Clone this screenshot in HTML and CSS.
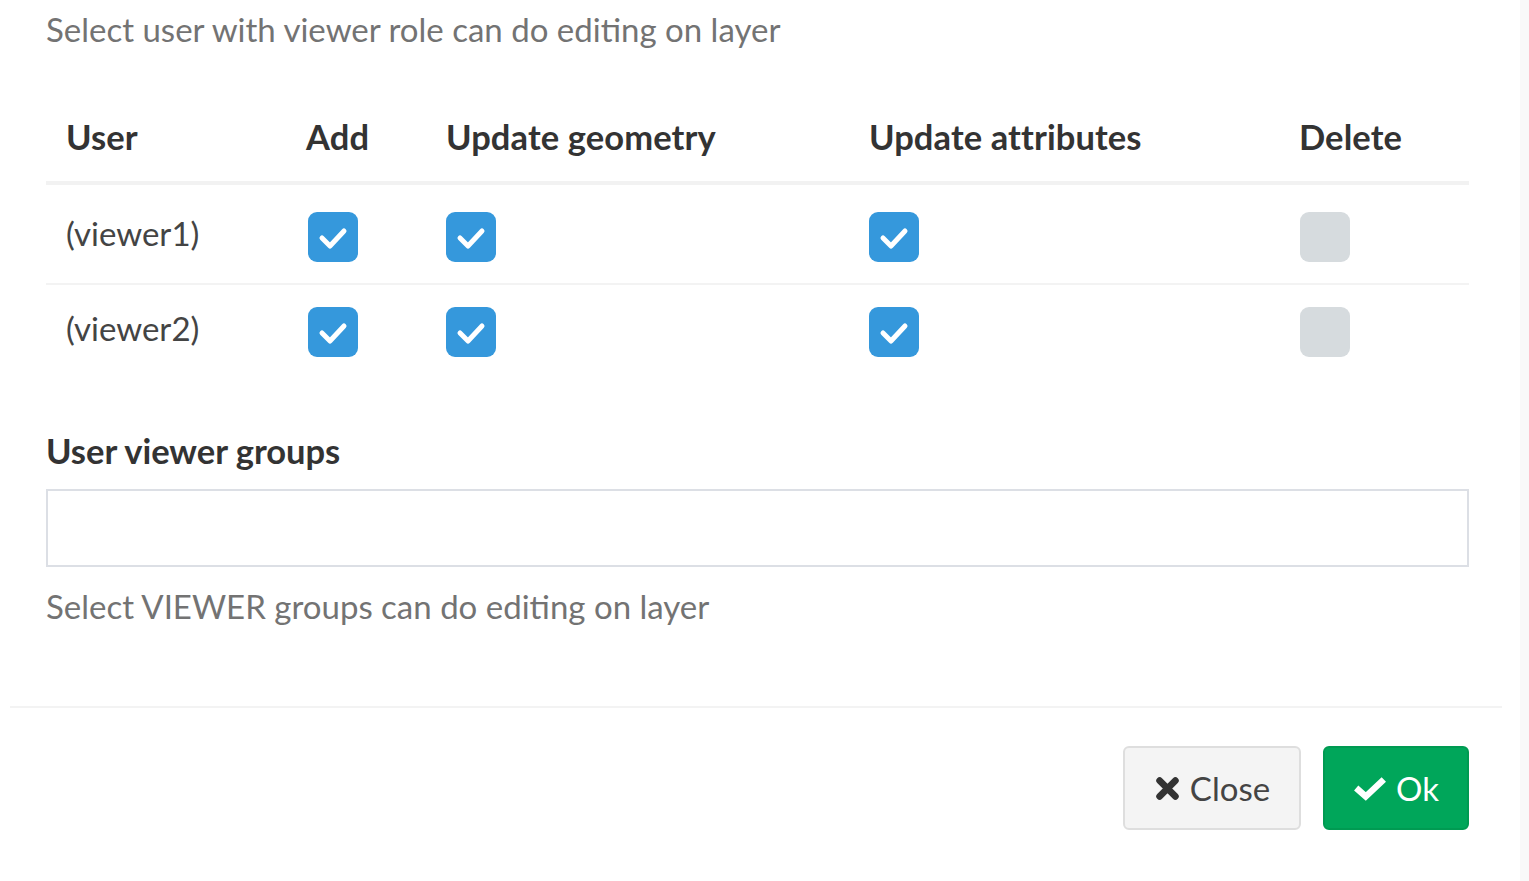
FILE: index.html
```html
<!DOCTYPE html>
<html lang="en">
<head>
<meta charset="utf-8">
<title>Viewer editing permissions</title>
<link rel="stylesheet" href="styles.css">
</head>
<body>
<div class="page">
  <div class="modal-body">
    <p class="help help-top">Select user with viewer role can do editing on layer</p>
    <table class="perm-table">
      <colgroup>
        <col class="c-user"><col class="c-add"><col class="c-geom"><col class="c-attr"><col class="c-del">
      </colgroup>
      <thead>
        <tr><th>User</th><th>Add</th><th>Update geometry</th><th>Update attributes</th><th>Delete</th></tr>
      </thead>
      <tbody>
        <tr>
          <td>(viewer1)</td>
          <td class="td-add"><span class="cb on"><svg viewBox="0 0 50 50"><polyline points="14,26 22,34 36,19"/></svg></span></td>
          <td><span class="cb on"><svg viewBox="0 0 50 50"><polyline points="14,26 22,34 36,19"/></svg></span></td>
          <td><span class="cb on"><svg viewBox="0 0 50 50"><polyline points="14,26 22,34 36,19"/></svg></span></td>
          <td class="td-del"><span class="cb off"></span></td>
        </tr>
        <tr>
          <td>(viewer2)</td>
          <td class="td-add"><span class="cb on"><svg viewBox="0 0 50 50"><polyline points="14,26 22,34 36,19"/></svg></span></td>
          <td><span class="cb on"><svg viewBox="0 0 50 50"><polyline points="14,26 22,34 36,19"/></svg></span></td>
          <td><span class="cb on"><svg viewBox="0 0 50 50"><polyline points="14,26 22,34 36,19"/></svg></span></td>
          <td class="td-del"><span class="cb off"></span></td>
        </tr>
      </tbody>
    </table>
    <div class="form-group">
      <label class="label">User viewer groups</label>
      <div class="input"></div>
      <p class="help">Select VIEWER groups can do editing on layer</p>
    </div>
  </div>
  <div class="modal-footer">
    <button class="btn btn-default"><svg class="ico ico-x" viewBox="0 0 24 24"><path d="M5 5 L19 19 M19 5 L5 19"/></svg>Close</button>
    <button class="btn btn-success"><svg class="ico ico-ok" viewBox="0 0 32 24"><path d="M3 12 L12 20 L29 4"/></svg>Ok</button>
  </div>
</div>
<div class="side"></div>
</body>
</html>
```
FILE: styles.css
```css
html, body {
  margin: 0;
  padding: 0;
  height: 100%;
}
body {
  display: flex;
  background: #fafafa;
  font-family: Lato, "Liberation Sans", sans-serif;
  font-size: 33px;
  color: #333;
  overflow: hidden;
}
.page {
  width: 1520px;
  flex: none;
  background: #fff;
}
.side {
  flex: 1;
  background: #f9f9f9;
}
.modal-body {
  padding: 9px 51px 0 46px;
}
.help {
  margin: 0;
  line-height: 40px;
  color: #737373;
}
.perm-table {
  margin-top: 44px;
  width: 1423px;
  table-layout: fixed;
  border-collapse: collapse;
}
.c-user { width: 240px; }
.c-add { width: 140px; }
.c-geom { width: 423px; }
.c-attr { width: 430px; }
.c-del { width: 190px; }
.perm-table th {
  text-align: left;
  font-weight: 700;
  font-size: 34.5px;
  letter-spacing: 0.1px;
  line-height: 40px;
  padding: 24px 20px 24px 20px;
  border-bottom: 4px solid #f2f2f2;
  color: #333;
}
.perm-table td {
  line-height: 50px;
  vertical-align: middle;
  color: #444;
}
.perm-table tbody tr:first-child td {
  padding: 27px 20px 21px 20px;
}
.perm-table tbody tr + tr td {
  padding: 22px 20px 22px 20px;
  border-top: 2px solid #f3f3f3;
}
.perm-table tbody tr td.td-add {
  padding-left: 22px;
  padding-right: 18px;
}
.perm-table tbody tr td.td-del {
  padding-left: 21px;
  padding-right: 19px;
}
.perm-table td:first-child {
  position: relative;
  top: -4px;
}
.cb {
  display: block;
  width: 50px;
  height: 50px;
  border-radius: 9px;
}
.cb.on { background: #3598dc; }
.cb.off { background: #d6dbde; }
.cb svg {
  display: block;
  width: 50px;
  height: 50px;
}
.cb polyline {
  fill: none;
  stroke: #fff;
  stroke-width: 5;
  stroke-linecap: round;
  stroke-linejoin: round;
}
.form-group {
  margin-top: 52px;
}
.label {
  display: block;
  font-weight: 700;
  font-size: 34.5px;
  line-height: 40px;
  color: #333;
}
.input {
  margin-top: 18px;
  height: 74px;
  border: 2px solid #dcdfe5;
  background: #fff;
}
.form-group .help {
  margin-top: 19px;
}
.modal-footer {
  margin: 80px 18px 0 10px;
  border-top: 2px solid #f3f3f3;
  padding: 38px 33px 0 0;
  display: flex;
  justify-content: flex-end;
  gap: 22px;
}
.btn {
  display: flex;
  align-items: center;
  justify-content: center;
  gap: 9px;
  height: 84px;
  font-family: inherit;
  font-size: 33px;
  border-radius: 6px;
  padding: 0;
  cursor: pointer;
}
.btn-default {
  width: 178px;
  background: #f4f4f4;
  border: 2px solid #dedede;
  color: #444;
}
.btn-success {
  width: 146px;
  background: #00a65a;
  border: 2px solid #009a52;
  color: #fff;
}
.ico {
  display: block;
  fill: none;
}
.ico-x {
  width: 27px;
  height: 27px;
  stroke: #333;
  stroke-width: 6;
  stroke-linecap: round;
}
.ico-ok {
  width: 34px;
  height: 26px;
  stroke: #fff;
  stroke-width: 6;
  stroke-linejoin: miter;
}
```
